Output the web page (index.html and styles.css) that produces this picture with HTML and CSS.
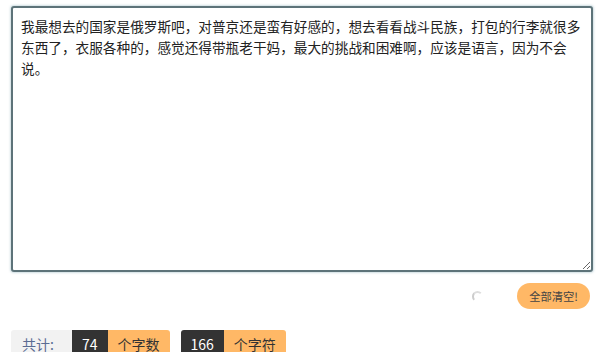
FILE: index.html
```html
<!DOCTYPE html>
<html lang="zh-CN">
<head>
<meta charset="UTF-8">
<title>字数统计</title>
<link rel="stylesheet" href="styles.css">
</head>
<body>
<div class="wrap">
  <textarea class="editor" id="editor">我最想去的国家是俄罗斯吧，对普京还是蛮有好感的，想去看看战斗民族，打包的行李就很多东西了，衣服各种的，感觉还得带瓶老干妈，最大的挑战和困难啊，应该是语言，因为不会说。</textarea>
  <div class="actions">
    <span class="spinner"></span>
    <button class="btn-clear" type="button">全部清空!</button>
  </div>
  <div class="stats">
    <div class="stat">
      <span class="stat-label">共计:</span>
      <span class="stat-num">74</span>
      <span class="stat-unit">个字数</span>
    </div>
    <div class="stat">
      <span class="stat-num">166</span>
      <span class="stat-unit">个字符</span>
    </div>
  </div>
</div>
</body>
</html>
```

FILE: styles.css
```css
body {
  margin: 0;
  padding: 0;
  background-color: #fff;
  font-family: "Noto Sans CJK SC", "Liberation Sans", sans-serif;
  color: #333;
}
.wrap {
  padding: 6px 7px 0 11px;
}
.editor {
  display: block;
  box-sizing: border-box;
  width: 582px;
  height: 266px;
  margin: 0;
  padding: 8px 8px;
  border: 2px solid #5d7379;
  border-radius: 3px;
  box-shadow: 0 0 2px 1px rgba(160, 190, 200, 0.5);
  font-family: "Noto Sans CJK SC", "Liberation Sans", sans-serif;
  font-size: 13.65px;
  line-height: 21px;
  color: #222;
  resize: both;
  outline: none;
}
.actions {
  display: flex;
  justify-content: flex-end;
  align-items: center;
  gap: 34px;
  margin-top: 11px;
  padding-right: 3px;
}
.spinner {
  width: 7px;
  height: 7px;
  border: 2px solid transparent;
  border-left-color: #ccc;
  border-top-color: #ddd;
  border-radius: 50%;
}
.btn-clear {
  height: 26px;
  padding: 0 12px;
  border: none;
  border-radius: 13px;
  background-color: #ffb866;
  color: #444;
  font-family: "Noto Sans CJK SC", "Liberation Sans", sans-serif;
  font-size: 11.3px;
  cursor: pointer;
}
.stats {
  display: flex;
  gap: 11px;
  margin-top: 21px;
}
.stat {
  display: flex;
  height: 28px;
  font-size: 14px;
  line-height: 28px;
  border-radius: 3px;
  overflow: hidden;
}
.stat-label {
  width: 61px;
  padding-left: 11px;
  box-sizing: border-box;
  background-color: #f2f2f2;
  color: #5a6c92;
}
.stat-num {
  padding: 0 10px;
  background-color: #333;
  color: #fff;
}
.stat-unit {
  padding: 0 10px;
  background-color: #ffb866;
  color: #333;
}
```
